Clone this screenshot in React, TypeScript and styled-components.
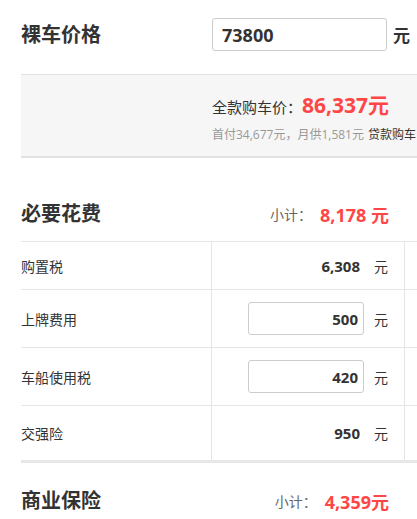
import React from "react";
import styled, { createGlobalStyle } from "styled-components";

const Global = createGlobalStyle`
  html, body { margin: 0; padding: 0; background: #fff; overflow: hidden; }
  body { font-family: "Open Sans", "Noto Sans CJK SC", sans-serif; color: #333; }
`;

const Viewport = styled.div`
  width: 417px;
  height: 519px;
  overflow: hidden;
`;

const Page = styled.div`
  width: 760px;
  padding-left: 21px;
`;

const PriceRow = styled.div`
  display: flex;
  align-items: center;
  padding-top: 18px;
  height: 33px;
`;

const BigTitle = styled.div`
  width: 191px;
  font-size: 20px;
  font-weight: 700;
  line-height: 28px;
  color: #333;
`;

const PriceInput = styled.input`
  box-sizing: border-box;
  width: 175px;
  height: 33px;
  border: 1px solid #ccc;
  border-radius: 3px;
  padding: 0 9px;
  font-family: inherit;
  font-size: 18px;
  font-weight: 700;
  color: #333;
  outline: none;
`;

const StrongUnit = styled.span`
  margin-left: 6px;
  font-size: 17px;
  font-weight: 700;
  color: #333;
`;

const Summary = styled.div`
  margin-top: 23px;
  height: 81px;
  box-sizing: content-box;
  background: #f6f6f6;
  border-top: 1px solid #e2e2e2;
  border-bottom: 2px solid #e2e2e2;
  padding-left: 191px;
`;

const TotalLine = styled.div`
  display: flex;
  align-items: baseline;
  padding-top: 16px;
  line-height: 28px;
  white-space: nowrap;
`;

const TotalLabel = styled.span`
  font-size: 15px;
  color: #333;
`;

const Red = styled.span<{ $size: number }>`
  font-size: ${(p) => p.$size}px;
  font-weight: 700;
  color: #ff4646;
`;

const LoanLine = styled.div`
  margin-top: 5px;
  line-height: 18px;
  font-size: 12px;
  color: #999;
  white-space: nowrap;
`;

const LoanLink = styled.span`
  color: #333;
  margin-left: 4px;
`;

const SectionHeader = styled.div<{ $top: number }>`
  display: flex;
  align-items: center;
  justify-content: space-between;
  width: 368px;
  height: 55px;
  margin-top: ${(p) => p.$top}px;
`;

const Subtotal = styled.div`
  display: flex;
  align-items: center;
  white-space: nowrap;
`;

const SubLabel = styled.span`
  font-size: 14px;
  color: #666;
  margin-right: 8px;
`;

const Table = styled.div`
  border-top: 1px solid #e5e5e5;
`;

const Row = styled.div<{ $h: number; $last?: boolean }>`
  display: grid;
  grid-template-columns: 190px 193px 1fr;
  height: ${(p) => p.$h}px;
  border-bottom: ${(p) => (p.$last ? "3px solid #e8e8e8" : "1px solid #e5e5e5")};
`;

const LabelCell = styled.div`
  display: flex;
  align-items: center;
  font-size: 14px;
  color: #333;
`;

const ValueCell = styled.div`
  display: flex;
  align-items: center;
  justify-content: flex-end;
  padding-right: 17px;
  border-left: 1px solid #e5e5e5;
`;

const ExtraCell = styled.div`
  border-left: 1px solid #e5e5e5;
`;

const Value = styled.span`
  font-size: 15px;
  font-weight: 700;
  color: #333;
  padding-right: 4px;
`;

const FeeInput = styled.input`
  box-sizing: border-box;
  width: 116px;
  height: 33px;
  border: 1px solid #ccc;
  border-radius: 3px;
  padding: 0 5px;
  text-align: right;
  font-family: inherit;
  font-size: 15px;
  font-weight: 700;
  color: #333;
  outline: none;
`;

const Unit = styled.span`
  margin-left: 10px;
  width: 13px;
  font-size: 14px;
  color: #333;
`;

type Fee = { label: string; value: string; editable?: boolean; h: number };

const fees: Fee[] = [
  { label: "购置税", value: "6,308", h: 47 },
  { label: "上牌费用", value: "500", editable: true, h: 57 },
  { label: "车船使用税", value: "420", editable: true, h: 57 },
  { label: "交强险", value: "950", h: 54 },
];

export default function App() {
  return (
    <Viewport>
      <Global />
      <Page>
        <PriceRow>
          <BigTitle>裸车价格</BigTitle>
          <PriceInput defaultValue="73800" />
          <StrongUnit>元</StrongUnit>
        </PriceRow>

        <Summary>
          <TotalLine>
            <TotalLabel>全款购车价：</TotalLabel>
            <Red $size={21}>86,337元</Red>
          </TotalLine>
          <LoanLine>
            首付34,677元，月供1,581元<LoanLink>贷款购车</LoanLink>
          </LoanLine>
        </Summary>

        <SectionHeader $top={28}>
          <BigTitle>必要花费</BigTitle>
          <Subtotal>
            <SubLabel>小计：</SubLabel>
            <Red $size={18}>8,178 元</Red>
          </Subtotal>
        </SectionHeader>

        <Table>
          {fees.map((f, i) => (
            <Row key={f.label} $h={f.h} $last={i === fees.length - 1}>
              <LabelCell>{f.label}</LabelCell>
              <ValueCell>
                {f.editable ? <FeeInput defaultValue={f.value} /> : <Value>{f.value}</Value>}
                <Unit>元</Unit>
              </ValueCell>
              <ExtraCell />
            </Row>
          ))}
        </Table>

        <SectionHeader $top={10}>
          <BigTitle>商业保险</BigTitle>
          <Subtotal>
            <SubLabel>小计：</SubLabel>
            <Red $size={18}>4,359元</Red>
          </Subtotal>
        </SectionHeader>
      </Page>
    </Viewport>
  );
}
